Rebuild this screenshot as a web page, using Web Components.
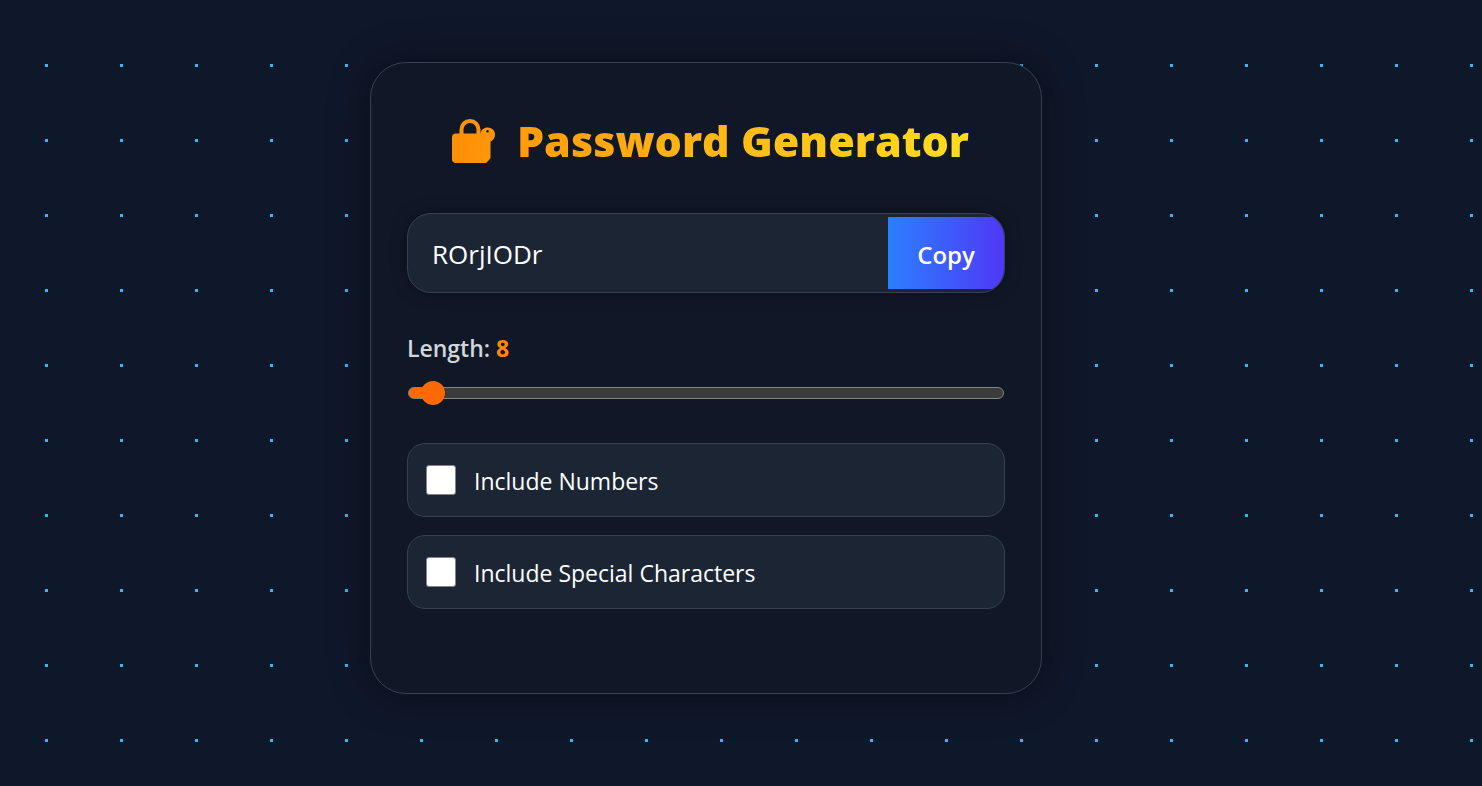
<!DOCTYPE html>
<html lang="en">
<head>
<meta charset="utf-8">
<title>Password Generator</title>
<style>
  body {
    margin: 0;
    color: #fff;
    background: #0f172a;
    font-family: "Segoe UI", "Open Sans", "Noto Sans", sans-serif;
  }
</style>
</head>
<body>
<dotted-stage>
  <generator-card>
    <card-title slot="title">Password Generator</card-title>
    <password-field value="ROrjIODr"></password-field>
    <length-slider value="8" min="6" max="100"></length-slider>
    <option-group>
      <option-row>Include Numbers</option-row>
      <option-row>Include Special Characters</option-row>
    </option-group>
  </generator-card>
</dotted-stage>
<script>
  class BaseElement extends HTMLElement {
    constructor() {
      super();
      this.attachShadow({ mode: 'open' });
    }
    connectedCallback() {
      this.shadowRoot.innerHTML = this.render();
      this.ready();
    }
    ready() {}
  }

  customElements.define('dotted-stage', class extends BaseElement {
    render() {
      return `<style>
        :host {
          display: flex; justify-content: center; align-items: center;
          box-sizing: border-box; min-height: 100vh; padding: 24px 70px 54px 0;
          background: conic-gradient(from 90deg at 72px 72px, #38b6ee 25%, transparent 0) 48px 67px / 75px 75px #0f172a;
        }
      </style><slot></slot>`;
    }
  });

  customElements.define('generator-card', class extends BaseElement {
    render() {
      return `<style>
        :host {
          display: block; box-sizing: border-box; width: 100%; max-width: 672px;
          padding: 48px 36px 84px; border: 1px solid #364153; border-radius: 36px;
          background: #101828; box-shadow: 0 0 40px rgba(0,0,0,.4);
        }
        section { display: flex; flex-direction: column; }
      </style><section><slot name="title"></slot><slot></slot></section>`;
    }
  });

  customElements.define('card-title', class extends BaseElement {
    render() {
      return `<style>
        :host { display: block; margin-bottom: 42px; }
        h1 {
          display: flex; align-items: center; justify-content: center; gap: 22px;
          margin: 0; padding-left: 8px; font-size: 43px; line-height: 60px; font-weight: 800; white-space: nowrap;
        }
        svg { width: 44px; height: 46px; flex: none; }
        span {
          color: transparent; background: linear-gradient(90deg, #ff9b0c, #ffdd1e);
          -webkit-background-clip: text; background-clip: text;
        }
      </style>
      <h1>
        <svg viewBox="0 0 44 46" aria-hidden="true">
          <defs><linearGradient id="g"><stop stop-color="#ff8f06"/><stop offset="1" stop-color="#ff970a"/></linearGradient></defs>
          <path d="M10.500 17V11.500a8 8 0 0 1 17 0V17" fill="none" stroke="#ff920a" stroke-width="4"/>
          <path fill="url(#g)" fill-rule="evenodd" d="M5 15.500H29.500C30 12 33 9.500 36.500 9.500C41 9.500 44 12.500 44 16.500C44 20 42 22.500 39.500 23.500V40L38 42L35 45H5Q1 45 1 41V19.500Q1 15.500 5 15.500ZM36.500 12a1.300 1.300 0 1 0 .1 0Z"/>
        </svg>
        <span><slot></slot></span>
      </h1>`;
    }
  });

  customElements.define('password-field', class extends BaseElement {
    render() {
      return `<style>
        :host {
          display: flex; align-items: center; box-sizing: border-box; height: 80px;
          margin-bottom: 36px; border: 1px solid #364153; border-radius: 24px; overflow: hidden;
          background: #1c2534; box-shadow: 0 0 16px rgba(0,0,0,.4);
        }
        input {
          flex: 1; min-width: 0; height: 72px; box-sizing: border-box; padding: 2px 24px 0;
          border: 0; outline: 0; background: none; color: #fff;
          font-family: inherit; font-size: 26px;
        }
        button {
          width: 116px; height: 72px; padding: 2px 0 0; border: 0; color: #fff; cursor: pointer;
          font-family: inherit; font-size: 24px; font-weight: 600;
          background: linear-gradient(90deg, #2b7fff, #4f39f6);
        }
      </style>
      <input type="text" readonly aria-label="Generated password" value="${this.getAttribute('value')}">
      <button type="button">Copy</button>`;
    }
    ready() {
      const input = this.shadowRoot.querySelector('input');
      this.shadowRoot.querySelector('button').addEventListener('click', () => {
        input.select();
        navigator.clipboard?.writeText(input.value);
      });
    }
  });

  customElements.define('length-slider', class extends BaseElement {
    render() {
      const [value, min, max] = ['value', 'min', 'max'].map(n => this.getAttribute(n));
      return `<style>
        :host { display: flex; flex-direction: column; gap: 14px; margin-bottom: 38px; }
        label { color: #d1d5dc; font-size: 23px; line-height: 38px; font-weight: 600; }
        output { color: #ff8904; font-weight: 700; }
        input {
          appearance: none; -webkit-appearance: none; width: calc(100% - 2px); height: 24px; margin: 0 1px;
          background: none; outline: 0;
        }
        input::-webkit-slider-runnable-track {
          height: 12px; box-sizing: border-box; border: 1px solid #858585; border-radius: 6px;
          background: linear-gradient(90deg, #ff6900 var(--fill), #3b3b3b var(--fill));
        }
        input::-webkit-slider-thumb {
          -webkit-appearance: none; width: 24px; height: 24px; margin-top: -7px;
          border-radius: 50%; background: #ff6900;
        }
      </style>
      <label for="range">Length: <output>${value}</output></label>
      <input id="range" type="range" min="${min}" max="${max}" value="${value}">`;
    }
    ready() {
      const range = this.shadowRoot.querySelector('input');
      const output = this.shadowRoot.querySelector('output');
      const update = () => {
        const ratio = (range.value - range.min) / (range.max - range.min);
        range.style.setProperty('--fill', `calc(12px + (100% - 24px) * ${ratio})`);
        output.textContent = range.value;
      };
      range.addEventListener('input', update);
      update();
    }
  });

  customElements.define('option-group', class extends BaseElement {
    render() {
      return `<style>:host { display: flex; flex-direction: column; gap: 18px; }</style><slot></slot>`;
    }
  });

  customElements.define('option-row', class extends BaseElement {
    render() {
      return `<style>
        :host { display: block; }
        label {
          display: flex; align-items: center; gap: 18px; box-sizing: border-box; height: 74px;
          padding: 0 18px; border: 1px solid #364153; border-radius: 18px;
          background: #1c2534; font-size: 23px; line-height: 36px; cursor: pointer;
        }
        input {
          appearance: none; -webkit-appearance: none; box-sizing: border-box; flex: none;
          width: 30px; height: 30px; margin: 0; border: 1px solid #858585; border-radius: 3px;
          background: #fff;
        }
        input:checked { background: #ff6900; }
        span { padding-top: 2px; }
      </style>
      <label><input type="checkbox"><span><slot></slot></span></label>`;
    }
  });
</script>
</body>
</html>
